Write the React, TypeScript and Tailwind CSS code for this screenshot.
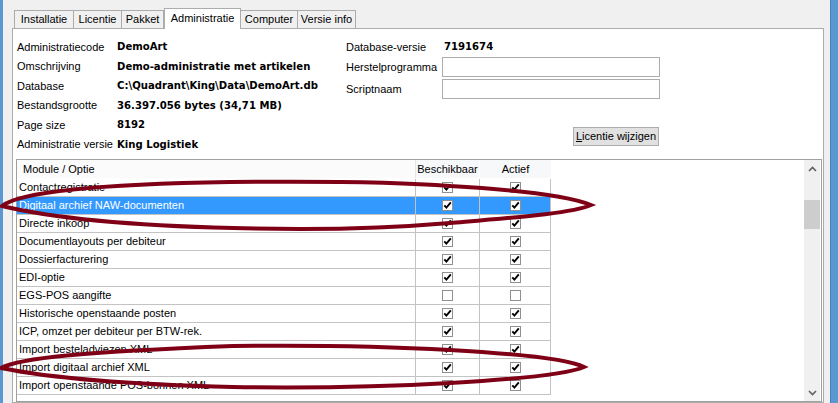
import React from 'react';

interface Row {
	name: string;
	available: boolean;
	active: boolean;
	selected?: boolean;
}

const rows: Row[] = [
	{ name: 'Contactregistratie', available: true, active: true },
	{ name: 'Digitaal archief NAW-documenten', available: true, active: true, selected: true },
	{ name: 'Directe inkoop', available: true, active: true },
	{ name: 'Documentlayouts per debiteur', available: true, active: true },
	{ name: 'Dossierfacturering', available: true, active: true },
	{ name: 'EDI-optie', available: true, active: true },
	{ name: 'EGS-POS aangifte', available: false, active: false },
	{ name: 'Historische openstaande posten', available: true, active: true },
	{ name: 'ICP, omzet per debiteur per BTW-rek.', available: true, active: true },
	{ name: 'Import besteladviezen XML', available: true, active: true },
	{ name: 'Import digitaal archief XML', available: true, active: true },
	{ name: 'Import openstaande POS-bonnen XML', available: true, active: true }
];

const info: [string, string][] = [
	['Administratiecode', 'DemoArt'],
	['Omschrijving', 'Demo-administratie met artikelen'],
	['Database', 'C:\\Quadrant\\King\\Data\\DemoArt.db'],
	['Bestandsgrootte', '36.397.056 bytes (34,71 MB)'],
	['Page size', '8192'],
	['Administratie versie', 'King Logistiek']
];

const tabs = [
	{ label: 'Installatie', w: 'w-[59px]' },
	{ label: 'Licentie', w: 'w-[48px]' },
	{ label: 'Pakket', w: 'w-[43px]' },
	{ label: 'Administratie', w: 'w-[77px]', active: true },
	{ label: 'Computer', w: 'w-[56px]' },
	{ label: 'Versie info', w: 'w-[59px]' }
];

const bold = { fontFamily: '"DejaVu Sans", sans-serif' };

function Check({ checked }: { checked: boolean }) {
	return (
		<svg width="11" height="11" viewBox="0 0 11 11" className="block">
			<rect x="0.5" y="0.5" width="10" height="10" fill="white" stroke="#8e8f8f" />
			{checked && <path d="M2.3 5.3 L4.4 7.6 L8.8 2.4" fill="none" stroke="black" strokeWidth="1.9" />}
		</svg>
	);
}

function Chevron({ up }: { up?: boolean }) {
	return (
		<svg width="9" height="6" viewBox="0 0 9 6">
			<path d={up ? 'M1 5 L4.5 1.5 L8 5' : 'M1 1 L4.5 4.5 L8 1'} fill="none" stroke="#606060" strokeWidth="1.6" />
		</svg>
	);
}

export default function App() {
	return (
		<div
			className="relative w-[838px] h-[403px] overflow-hidden flex bg-[#f0f0f0] text-[11px] text-black"
			style={{ fontFamily: '"Liberation Sans", Arial, sans-serif' }}
		>
			<div className="w-[3px] shrink-0 bg-[#5b98d2]" />

			<div className="flex-1 flex flex-col pl-[9px] pr-[6px] pt-[8px]">
				{/* tabs */}
				<div className="flex items-end h-[20px] pl-[2px]">
					{tabs.map((t, i) =>
						t.active ? (
							<div
								key={t.label}
								className={`${t.w} h-[21px] -mb-px z-10 bg-white border border-b-0 border-[#acacac] flex justify-center pt-[3px] leading-[13px]`}
							>
								{t.label}
							</div>
						) : (
							<div
								key={t.label}
								className={`${t.w} h-[18px] bg-[#f0f0f0] border-t border-[#acacac] ${i === 0 || tabs[i - 1].active ? '' : 'border-l'} ${i === tabs.length - 1 || tabs[i + 1]?.active ? 'border-r' : ''} ${i === 0 ? 'border-l' : ''} flex items-center justify-center`}
							>
								{t.label}
							</div>
						)
					)}
				</div>

				{/* panel */}
				<div className="flex-1 bg-white border border-[#acacac] flex flex-col">
					<div className="h-[130px] shrink-0 flex pt-[8px] pl-[4px]">
						<div className="w-[329px]">
							{info.map(([label, value]) => (
								<div key={label} className="h-[19.5px] flex items-center">
									<div className="w-[100px] shrink-0">{label}</div>
									<div className="font-bold text-[10.1px] whitespace-nowrap" style={bold}>
										{value}
									</div>
								</div>
							))}
						</div>
						<div className="w-[318px] flex flex-col">
							<div className="h-[20px] flex items-center">
								<div className="w-[98px] shrink-0">Database-versie</div>
								<div className="font-bold text-[10.1px]" style={bold}>7191674</div>
							</div>
							<div className="h-[20px] flex items-center">
								<div className="w-[96px] shrink-0">Herstelprogramma</div>
								<div className="w-[218px] h-[20px] border border-[#acacac] bg-white" />
							</div>
							<div className="h-[20px] mt-[2px] flex items-center">
								<div className="w-[96px] shrink-0">Scriptnaam</div>
								<div className="w-[218px] h-[20px] border border-[#acacac] bg-white" />
							</div>
							<div className="flex justify-end pr-[5px] mt-[28px]">
								<button className="w-[86px] h-[19px] bg-[#e1e1e1] border border-[#adadad] flex items-center justify-center leading-none">
									<span><span className="underline">L</span>icentie wijzigen</span>
								</button>
							</div>
						</div>
					</div>

					{/* module grid */}
					<div className="ml-[3px] mr-[1px] h-[243px] shrink-0 border border-[#a0a0a0] flex">
						<div className="flex-1 flex flex-col">
							<div className="h-[19px] shrink-0 flex">
								<div className="w-[399px] h-[18px] bg-[#fbfbfc] border-r border-[#e6e6e6] flex items-center pl-[6px]">
									Module / Optie
								</div>
								<div className="w-[64px] h-[18px] bg-[#f7f8fa] border-r border-white flex items-center justify-center">
									Beschikbaar
								</div>
								<div className="w-[71px] h-[18px] bg-[#f7f8fa] flex items-center justify-center">
									Actief
								</div>
							</div>
							{rows.map(r => (
								<div
									key={r.name}
									className={`w-[534px] h-[18px] shrink-0 flex border-b border-[#c3c3c3] ${r.selected ? 'bg-[#3399ff] text-white' : ''}`}
								>
									<div className="w-[399px] border-r border-[#c3c3c3] flex items-center pl-[2px] whitespace-nowrap">
										{r.name}
									</div>
									<div className="w-[64px] border-r border-[#c3c3c3] flex items-center justify-center">
										<Check checked={r.available} />
									</div>
									<div className="w-[71px] border-r border-[#c3c3c3] flex items-center justify-center">
										<Check checked={r.active} />
									</div>
								</div>
							))}
						</div>
						<div className="w-[16px] mr-px bg-[#f0f0f0] flex flex-col">
							<div className="h-[17px] flex items-center justify-center">
								<Chevron up />
							</div>
							<div className="h-[23px]" />
							<div className="h-[29px] bg-[#cdcdcd]" />
							<div className="flex-1" />
							<div className="h-[17px] flex items-center justify-center">
								<Chevron />
							</div>
						</div>
					</div>
				</div>
			</div>

			<div className="w-[8px] shrink-0 bg-[#5b98d2] border-l border-[#4682c0]" />

			{/* hand-drawn highlight marks */}
			<svg className="absolute left-0 top-0 pointer-events-none" width="838" height="403" viewBox="0 0 838 403">
				<path
					d="M2 206 C 20 192, 100 184, 230 182 C 330 181, 400 182, 450 186 C 520 190, 568 196, 591 205 C 573 213, 520 217, 450 223 C 380 229, 300 230, 233 228 C 150 226, 60 220, 2 206 Z"
					fill="none"
					stroke="#7f0016"
					strokeWidth="4"
				/>
				<path
					d="M1 368 C 20 358, 80 352, 233 346 C 320 345, 380 346, 450 350 C 520 354, 568 359, 584 367 C 568 374, 520 379, 450 383 C 380 387, 300 388, 233 387 C 150 385, 60 380, 1 368 Z"
					fill="none"
					stroke="#7f0016"
					strokeWidth="4"
				/>
			</svg>
		</div>
	);
}
